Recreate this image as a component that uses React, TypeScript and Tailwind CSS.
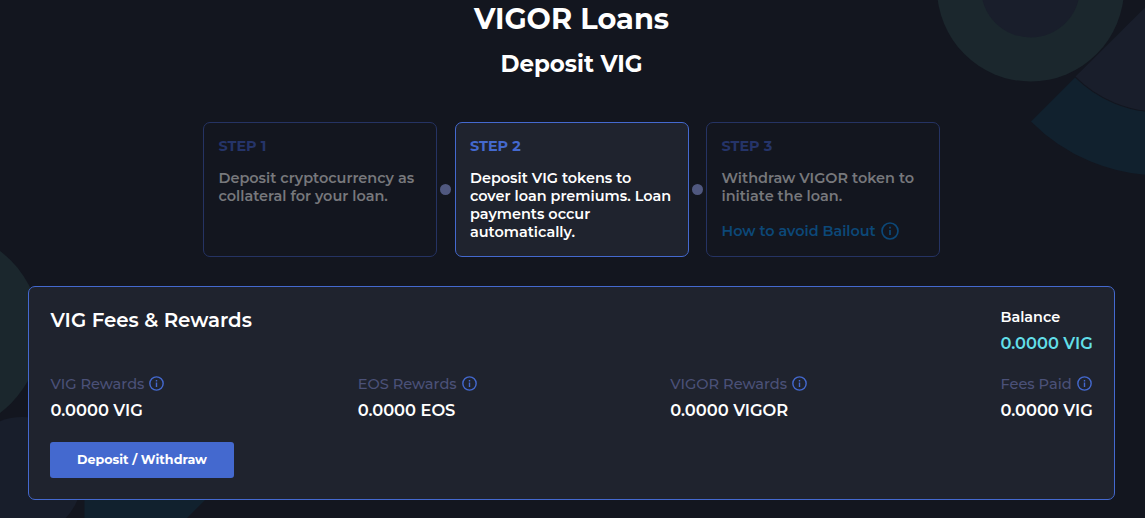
import clsx from "clsx";
import type { ReactNode } from "react";

interface Step {
  title: string;
  lines: string[];
  active?: boolean;
  link?: string;
}

interface Stat {
  label: string;
  value: string;
  width: string;
}

const steps: Step[] = [
  {
    title: "STEP 1",
    lines: ["Deposit cryptocurrency as", "collateral for your loan."],
  },
  {
    title: "STEP 2",
    active: true,
    lines: ["Deposit VIG tokens to", "cover loan premiums. Loan", "payments occur", "automatically."],
  },
  {
    title: "STEP 3",
    lines: ["Withdraw VIGOR token to", "initiate the loan."],
    link: "How to avoid Bailout",
  },
];

const stats: Stat[] = [
  { label: "VIG Rewards", value: "0.0000 VIG", width: "w-[113.5px]" },
  { label: "EOS Rewards", value: "0.0000 EOS", width: "w-[119px]" },
  { label: "VIGOR Rewards", value: "0.0000 VIGOR", width: "w-[136.5px]" },
  { label: "Fees Paid", value: "0.0000 VIG", width: "w-[91.5px]" },
];

function InfoIcon({ className }: { className: string }) {
  return (
    <svg viewBox="0 0 16 16" fill="none" stroke="currentColor" className={clsx("shrink-0", className)}>
      <circle cx="8" cy="8" r="7.1" strokeWidth="1.5" />
      <path d="M8 7v4.6M8 4.3v1.5" strokeWidth="1.5" />
    </svg>
  );
}

function Backdrop() {
  return (
    <svg className="absolute inset-0 -z-10" width="1145" height="518" viewBox="0 0 1145 518">
      <circle cx="1030.5" cy="-12" r="93.5" fill="#1b272d" />
      <circle cx="1030.5" cy="-12" r="49.5" fill="#191e2b" />
      <path d="M1031 121.5L1075 77.5A120.5 120.5 0 0 0 1160 112.5V175.5A182.5 182.5 0 0 1 1031 121.5Z" fill="#11212e" />
      <path d="M1075.5 76.5L1160 -7.5V111.5A119.5 119.5 0 0 1 1075.5 76.5Z" fill="#191e2b" />
      <circle cx="-60.5" cy="332" r="101" fill="#1b272d" />
      <circle cx="22" cy="477" r="60" fill="#181e2b" />
      <path d="M84.5 480H225L187 518H84.5Z" fill="#11212e" />
    </svg>
  );
}

function StepCard({ step }: { step: Step }) {
  return (
    <div
      className={clsx(
        "h-[135px] w-[234px] rounded-[7px] border pt-[14px] pl-[14.5px]",
        step.active ? "border-[#4469cf] bg-[#1f232e]" : "border-[#253363]"
      )}
    >
      <h3 className={clsx("text-[14.4px] leading-[18px] font-bold", step.active ? "text-[#4469cf]" : "text-[#253469]")}>
        {step.title}
      </h3>
      <p className={clsx("mt-[14px] text-[14.45px] leading-[18px] font-semibold whitespace-nowrap", step.active ? "text-white" : "text-[#77787c]")}>
        {step.lines.map((line) => (
          <span key={line} className="block">
            {line}
          </span>
        ))}
      </p>
      {step.link && (
        <a className="mt-[16px] flex items-center gap-[5px] text-[14.4px] leading-[20px] font-semibold whitespace-nowrap text-[#0c4878]">
          {step.link}
          <InfoIcon className="size-[18px]" />
        </a>
      )}
    </div>
  );
}

function Dot() {
  return <span className="-mx-0.5 size-[11px] rounded-full bg-[#50587f]" />;
}

function Value({ children, className }: { children: ReactNode; className?: string }) {
  return <div className={clsx("mt-1.5 text-[16.3px] leading-5 font-semibold whitespace-nowrap", className)}>{children}</div>;
}

export default function App() {
  return (
    <main className="relative isolate h-[518px] w-[1145px] overflow-hidden bg-[#13161f] px-7 font-[Montserrat,Inter,sans-serif] text-white">
      <Backdrop />
      <h1 className="pt-px pr-0.5 text-center text-[28.8px] leading-9 font-bold">VIGOR Loans</h1>
      <h2 className="mt-[11px] pr-0.5 text-center text-[23px] leading-8 font-bold">Deposit VIG</h2>

      <section className="mt-[42px] ml-[175px] flex w-[737px] items-center justify-between">
        <StepCard step={steps[0]} />
        <Dot />
        <StepCard step={steps[1]} />
        <Dot />
        <StepCard step={steps[2]} />
      </section>

      <section className="mt-[29px] h-[214px] w-[1087px] rounded-[7px] border border-[#4469cf] bg-[#1f232e] pt-[19px] pr-[22px] pl-[21.5px]">
        <div className="flex justify-between">
          <h2 className="text-[19.8px] leading-7 font-semibold">VIG Fees &amp; Rewards</h2>
          <div className="w-[91.5px] pt-px">
            <div className="text-[14.4px] leading-5 font-semibold">Balance</div>
            <Value className="text-[#62dfe8]">0.0000 VIG</Value>
          </div>
        </div>

        <div className="mt-[21px] flex justify-between">
          {stats.map((stat) => (
            <div key={stat.label} className={stat.width}>
              <div className="flex items-center justify-between text-[14.6px] leading-5 font-medium whitespace-nowrap text-[#4b5178]">
                {stat.label}
                <InfoIcon className="mb-px size-[15px] text-[#4469cf]" />
              </div>
              <Value>{stat.value}</Value>
            </div>
          ))}
        </div>

        <button className="mt-[22px] -ml-[0.5px] h-9 w-[184px] rounded-[3px] bg-[#4469cf] text-[12.7px] font-bold">
          Deposit / Withdraw
        </button>
      </section>
    </main>
  );
}
